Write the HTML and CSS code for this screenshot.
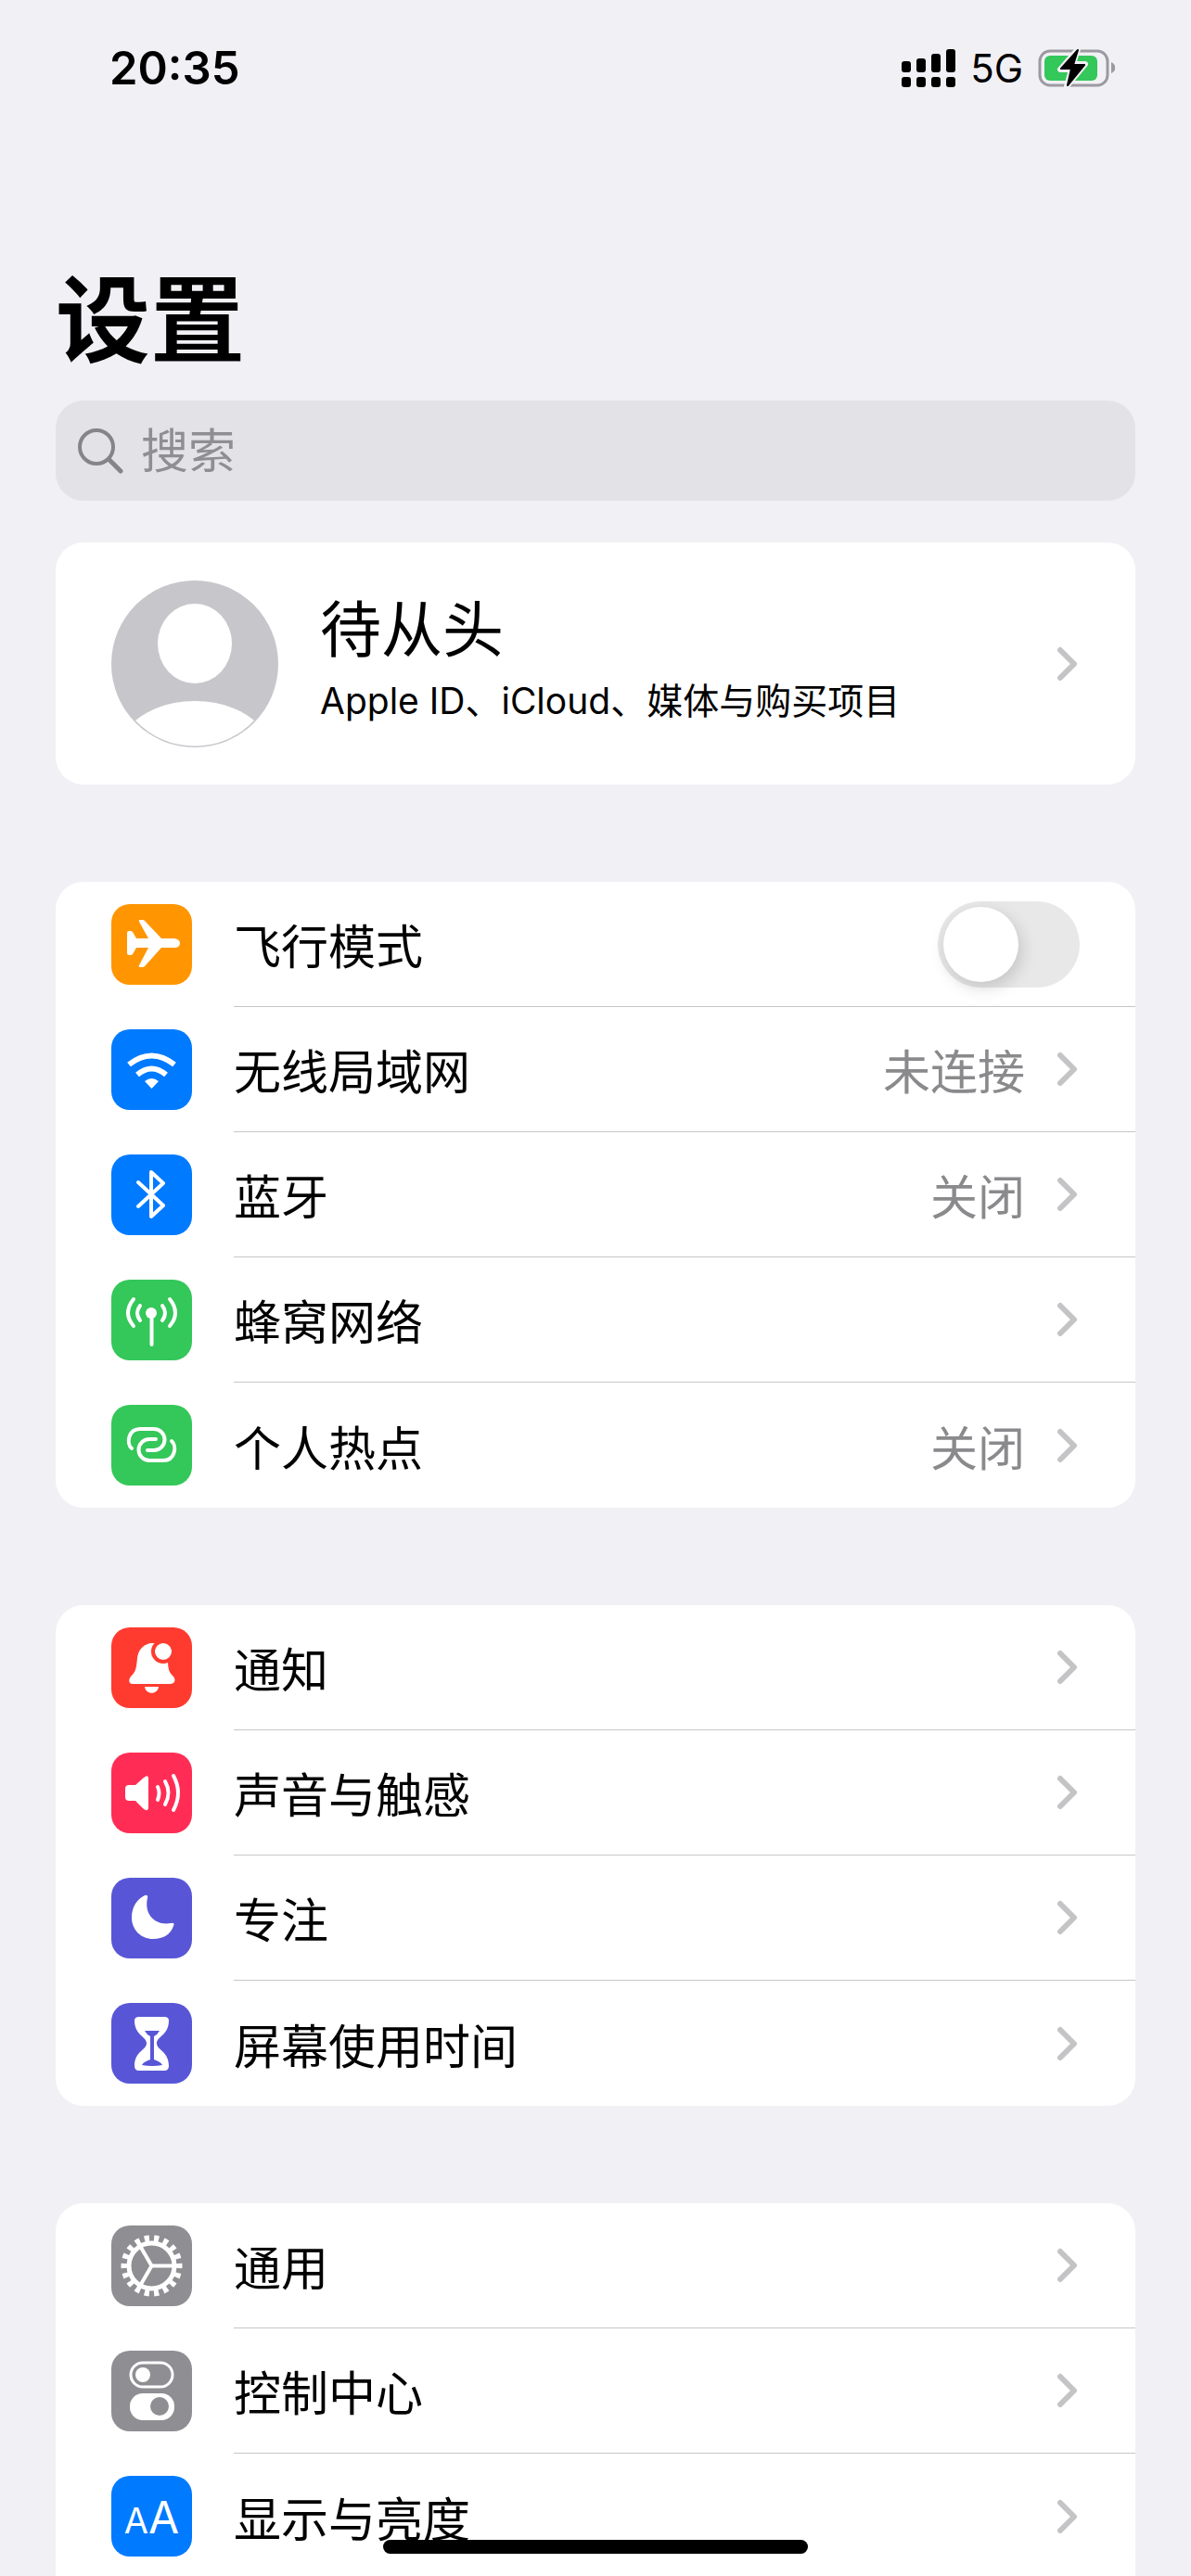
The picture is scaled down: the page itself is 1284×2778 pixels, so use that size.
FILE: index.html
```html
<!DOCTYPE html>
<html lang="zh-CN">
<head>
  <meta charset="UTF-8" />
  <meta name="viewport" content="width=device-width, initial-scale=1.0" />
  <title>设置</title>
  <link rel="stylesheet" href="styles.css">
</head>
<body>
  <!-- shared chevron -->
  <svg class="defs" aria-hidden="true">
    <symbol id="chevron" viewBox="0 0 24 42">
      <path d="M3 6 L18 21 L3 36" fill="none" stroke="#c4c4c6" stroke-width="6" stroke-linecap="round" stroke-linejoin="round"/>
    </symbol>
  </svg>

  <div class="screen">
    <header class="status-bar">
      <span class="time">20:35</span>
      <div class="status-icons">
        <svg class="signal" width="60" height="42" viewBox="0 0 60 42">
          <rect x="1" y="14" width="10" height="12" rx="3"/>
          <rect x="17" y="11" width="10" height="15" rx="3"/>
          <rect x="33" y="6" width="10" height="20" rx="3"/>
          <rect x="49" y="1" width="10" height="25" rx="3"/>
          <rect x="1" y="31" width="10" height="11" rx="3"/>
          <rect x="17" y="31" width="10" height="11" rx="3"/>
          <rect x="33" y="31" width="10" height="11" rx="3"/>
          <rect x="49" y="31" width="10" height="11" rx="3"/>
        </svg>
        <span class="network">5G</span>
        <svg width="84" height="44" viewBox="0 0 84 44">
          <rect x="3" y="4" width="73" height="37" rx="11" fill="none" stroke="#9c9aa0" stroke-width="3"/>
          <rect x="8" y="9" width="57" height="27" rx="6" fill="#34c759"/>
          <path d="M80 16 c6 3 6 9 0 12 z" fill="#9c9aa0"/>
          <path d="M44 2 L25 24 H37 L32 42 L52 18 H39 Z" fill="#000" stroke="#f1f0f5" stroke-width="6" stroke-linejoin="round" paint-order="stroke"/>
          <path d="M44 3 L26 23 H37 L33 41 L51 19 H39 Z" stroke="#000" stroke-width="2" stroke-linejoin="round"/>
        </svg>
      </div>
    </header>

    <main>
      <h1>设置</h1>

      <label class="search">
        <svg width="54" height="54" viewBox="0 0 54 54" fill="none" stroke="#858489" stroke-linecap="round">
          <circle cx="20" cy="23" r="18" stroke-width="4"/>
          <path d="M34 37 L46 49" stroke-width="5"/>
        </svg>
        <input type="search" placeholder="搜索" aria-label="搜索">
      </label>

      <a class="card profile" href="#">
        <svg class="avatar" width="180" height="180" viewBox="0 0 180 180">
          <circle cx="90" cy="90" r="90" fill="#c7c6cb"/>
          <ellipse cx="90" cy="68" rx="40" ry="43" fill="#fff"/>
          <path d="M26 151 C42 138 64 130 90 130 C116 130 138 138 154 151 A88 88 0 0 1 26 151 Z" fill="#fff"/>
        </svg>
        <div class="profile-text">
          <span class="name">待从头</span>
          <span class="desc">Apple ID、iCloud、媒体与购买项目</span>
        </div>
        <svg class="chevron"><use href="#chevron"/></svg>
      </a>

      <section class="card">
        <label class="row">
          <svg class="icon orange" viewBox="0 0 87 87">
            <path fill="#fff" d="M17 31 Q17 29 19 29 L21 29 Q22 29 23 30 L27 37 L40 37 L30 19 Q29 17 31 17 L34 17 Q35 17 36 18 L54 37 L68 37 Q74 38 74 42 Q74 47 68 47 L54 47 L36 67 Q35 68 34 68 L31 68 Q29 68 30 66 L40 47 L27 47 L23 54 Q22 55 21 55 L19 55 Q17 55 17 53 Z"/>
          </svg>
          <span class="row-body">
            <span class="label">飞行模式</span>
            <input class="switch" type="checkbox" role="switch">
          </span>
        </label>
        <a class="row" href="#">
          <svg class="icon blue" viewBox="0 0 87 87" fill="none" stroke="#fff">
            <path d="M19 38 Q43.500 19 68 38" stroke-width="6"/>
            <path d="M28 49 Q43.500 36 59 49" stroke-width="6"/>
            <path d="M36 56 Q43.500 50 51 56 L43.500 64 Z" fill="#fff" stroke="none"/>
          </svg>
          <span class="row-body">
            <span class="label">无线局域网</span>
            <span class="value">未连接</span>
            <svg class="chevron"><use href="#chevron"/></svg>
          </span>
        </a>
        <a class="row" href="#">
          <svg class="icon blue" viewBox="0 0 87 87" fill="none" stroke="#fff" stroke-width="4" stroke-linecap="round" stroke-linejoin="round">
            <path d="M29 30 L56 55 L43 67 V19 L56 31 L29 56"/>
          </svg>
          <span class="row-body">
            <span class="label">蓝牙</span>
            <span class="value">关闭</span>
            <svg class="chevron"><use href="#chevron"/></svg>
          </span>
        </a>
        <a class="row" href="#">
          <svg class="icon green" viewBox="0 0 87 87" fill="none" stroke="#fff" stroke-width="4" stroke-linecap="round">
            <circle cx="43" cy="36" r="6" fill="#fff" stroke="none"/>
            <path d="M43.500 38 V70"/>
            <path d="M31 28 Q25 36 31 44 M24 21 Q12 36 24 50 M55 28 Q61 36 55 44 M63 21 Q75 36 63 50"/>
          </svg>
          <span class="row-body">
            <span class="label">蜂窝网络</span>
            <svg class="chevron"><use href="#chevron"/></svg>
          </span>
        </a>
        <a class="row" href="#">
          <svg class="icon green" viewBox="0 0 87 87" fill="none" stroke="#fff" stroke-width="4" stroke-linecap="round">
            <path d="M22 47 C16 42 18 26 31 26 H46 A11.500 11.500 0 0 1 46 49 H39"/>
            <path d="M65 39 C71 44 69 60 56 60 H41 A11.500 11.500 0 0 1 41 37 H48"/>
          </svg>
          <span class="row-body">
            <span class="label">个人热点</span>
            <span class="value">关闭</span>
            <svg class="chevron"><use href="#chevron"/></svg>
          </span>
        </a>
      </section>

      <section class="card">
        <a class="row" href="#">
          <svg class="icon red" viewBox="0 0 87 87">
            <path fill="#fff" d="M43 17 C35 18 29 24 28 33 C27 45 26 48 21 53 C18 57 19 61 23 61 H64 C68 61 70 57 67 53 C62 48 61 45 61 34 L48 17 Z"/>
            <path fill="#fff" d="M36 64 H51 C50 73 37 73 36 64 Z"/>
            <circle cx="56" cy="26" r="11" fill="#fff" stroke="#ff3b30" stroke-width="4"/>
          </svg>
          <span class="row-body">
            <span class="label">通知</span>
            <svg class="chevron"><use href="#chevron"/></svg>
          </span>
        </a>
        <a class="row" href="#">
          <svg class="icon pink" viewBox="0 0 87 87" fill="none" stroke="#fff" stroke-width="4" stroke-linecap="round">
            <path fill="#fff" stroke="none" d="M19 35 H26 L35 27 Q40 23 40 28 V59 Q40 64 35 61 L26 52 H19 Q15 52 15 48 V39 Q15 35 19 35 Z"/>
            <path d="M50 37 Q53 43.500 50 51 M58 31 Q65 43.500 58 56 M67 25 Q77 43.500 67 62"/>
          </svg>
          <span class="row-body">
            <span class="label">声音与触感</span>
            <svg class="chevron"><use href="#chevron"/></svg>
          </span>
        </a>
        <a class="row" href="#">
          <svg class="icon purple" viewBox="0 0 87 87">
            <path fill="#fff" d="M36 19 Q40 18 39 22 C35 39 47 52 64 49 Q69 48 67 52 C64 61 56 66 45 66 C32 66 22 56 22 43 C22 31 28 23 36 19 Z"/>
          </svg>
          <span class="row-body">
            <span class="label">专注</span>
            <svg class="chevron"><use href="#chevron"/></svg>
          </span>
        </a>
        <a class="row" href="#">
          <svg class="icon purple" viewBox="0 0 87 87">
            <path fill="#fff" d="M30 15 H57 Q62 15 62 19 C62 35 49 36 49 43.500 C49 51 62 52 62 68 Q62 73 57 73 H30 Q25 73 25 68 C25 52 38 51 38 43.500 C38 36 25 35 25 19 Q25 15 30 15 Z"/>
            <path fill="#5856d6" d="M36 30 H52 Q50 34 46 36 V61 Q54 64 55 67 Q44 69 33 67 Q34 64 42 61 V36 Q38 34 36 30 Z"/>
          </svg>
          <span class="row-body">
            <span class="label">屏幕使用时间</span>
            <svg class="chevron"><use href="#chevron"/></svg>
          </span>
        </a>
      </section>

      <section class="card last">
        <a class="row" href="#">
          <svg class="icon gray" viewBox="0 0 87 87" fill="none" stroke="#fff">
            <circle cx="43.500" cy="43.500" r="24.500" stroke-width="5"/>
            <circle cx="43.500" cy="43.500" r="29.500" stroke-width="7" pathLength="180" stroke-dasharray="5 5" stroke-dashoffset="2.500"/>
            <path d="M68 43.500 H43.500 L31 22 M43.500 43.500 L31 65" stroke-width="4"/>
          </svg>
          <span class="row-body">
            <span class="label">通用</span>
            <svg class="chevron"><use href="#chevron"/></svg>
          </span>
        </a>
        <a class="row" href="#">
          <svg class="icon gray" viewBox="0 0 87 87">
            <rect x="21" y="13" width="45" height="26" rx="13" fill="none" stroke="#fff" stroke-width="3"/>
            <circle cx="34" cy="26" r="8" fill="#fff"/>
            <rect x="20" y="46" width="48" height="29" rx="14" fill="#fff"/>
            <circle cx="52" cy="60" r="10" fill="#8e8e93"/>
          </svg>
          <span class="row-body">
            <span class="label">控制中心</span>
            <svg class="chevron"><use href="#chevron"/></svg>
          </span>
        </a>
        <a class="row" href="#">
          <span class="icon blue aa"><small>A</small>A</span>
          <span class="row-body">
            <span class="label">显示与亮度</span>
            <svg class="chevron"><use href="#chevron"/></svg>
          </span>
        </a>
      </section>
    </main>

    <div class="home-indicator"></div>
  </div>
</body>
</html>
```
FILE: styles.css
```css
* {
  box-sizing: border-box;
}
body {
  margin: 0;
  font-family: Inter, "Noto Sans CJK SC", sans-serif;
  background-color: #f1f0f5;
  color: #000;
}
a {
  color: inherit;
  text-decoration: none;
}
svg {
  display: block;
  flex-shrink: 0;
}
.defs {
  position: absolute;
  width: 0;
  height: 0;
}
.screen {
  height: 100vh;
  overflow: hidden;
}

/* status bar */
.status-bar {
  display: flex;
  justify-content: space-between;
  align-items: center;
  height: 146px;
  padding: 0 82px 0 118px;
}
.time {
  font-size: 49px;
  font-weight: 600;
}
.status-icons {
  display: flex;
  align-items: center;
  gap: 15px;
}
.network {
  font-size: 42px;
}

main {
  padding: 120px 60px 0;
}
h1 {
  margin: 0 0 6px;
  font-size: 102px;
  line-height: 160px;
  font-weight: 700;
}

/* search */
.search {
  display: flex;
  align-items: center;
  gap: 14px;
  height: 108px;
  padding: 0 24px;
  border-radius: 30px;
  background-color: #e3e2e7;
}
.search input {
  flex: 1;
  min-width: 0;
  padding: 0;
  border: none;
  outline: none;
  background: none;
  font: inherit;
  font-size: 51px;
}
.search input::placeholder {
  color: #8f8e93;
}

/* cards */
.card {
  display: block;
  margin-bottom: 105px;
  border-radius: 30px;
  background-color: #fff;
}
.card.last {
  margin-bottom: 0;
  border-radius: 30px 30px 0 0;
}
.profile {
  display: flex;
  align-items: center;
  gap: 45px;
  height: 261px;
  margin-top: 45px;
  padding: 0 60px;
}
.profile-text {
  display: flex;
  flex: 1;
  flex-direction: column;
  padding-bottom: 4px;
}
.name {
  font-size: 66px;
  line-height: 84px;
}
.desc {
  font-size: 39px;
  line-height: 70px;
}
.chevron {
  width: 24px;
  height: 42px;
}

/* rows */
.row {
  display: flex;
  align-items: center;
  gap: 45px;
  height: 135px;
  padding-left: 60px;
}
.row-body {
  display: flex;
  flex: 1;
  align-items: center;
  height: 100%;
  padding-right: 60px;
  border-bottom: 1px solid #c6c6c8;
}
.row:last-child .row-body {
  border-bottom: none;
}
.label {
  flex: 1;
}
.label,
.value {
  font-size: 51px;
}
.value {
  margin-right: 35px;
  color: #8a8a8d;
}
.icon {
  width: 87px;
  height: 87px;
  border-radius: 20px;
}
.orange { background-color: #ff9500; }
.blue { background-color: #007aff; }
.green { background-color: #34c759; }
.red { background-color: #ff3b30; }
.pink { background-color: #ff2d55; }
.purple { background-color: #5856d6; }
.gray { background-color: #8e8e93; }
.aa {
  display: flex;
  justify-content: center;
  align-items: baseline;
  color: #fff;
  font-size: 48px;
  line-height: 90px;
}
.aa small {
  font-size: 38px;
}

/* switch */
.switch {
  appearance: none;
  width: 153px;
  height: 93px;
  margin: 0;
  padding: 6px;
  border-radius: 47px;
  background-color: #e8e8e8;
}
.switch::before {
  content: "";
  display: block;
  width: 81px;
  height: 81px;
  border-radius: 50%;
  background-color: #fff;
  box-shadow: 3px 6px 18px rgba(0,0,0,0.16);
}
.switch:checked {
  background-color: #34c759;
}
.switch:checked::before {
  margin-left: auto;
}

.home-indicator {
  position: fixed;
  bottom: 24px;
  left: 50%;
  width: 458px;
  height: 15px;
  border-radius: 8px;
  background-color: #000;
  transform: translateX(-50%);
}
```
